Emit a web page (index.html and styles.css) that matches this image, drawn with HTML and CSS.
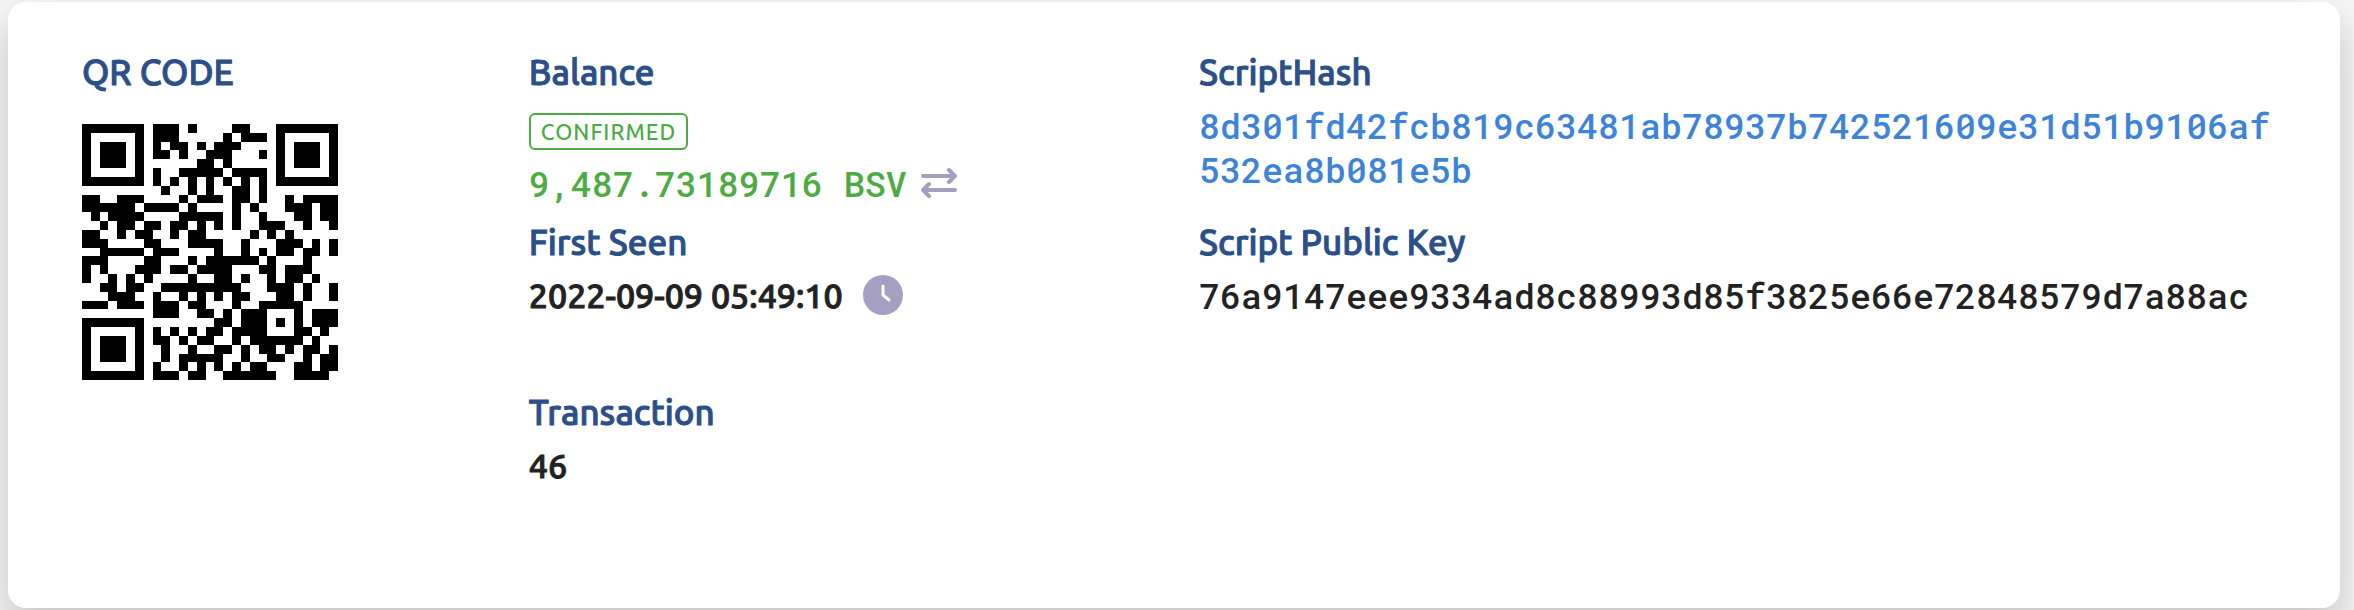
FILE: index.html
```
<!DOCTYPE html>
<html lang="en">
<head>
  <meta charset="UTF-8">
  <title>Address</title>
  <meta name="viewport" content="width=device-width, initial-scale=1.0">
  <link rel="stylesheet" href="styles.css">
</head>
<body>

<div class="card">
  <!-- QR -->
  <div class="col">
    <div class="label">QR CODE</div>
    <svg id="qr" class="qr" viewBox="0 0 29 29" role="img" aria-label="Address QR code"></svg>
  </div>

  <!-- BALANCE / DATES -->
  <div class="col">
    <div class="field">
      <div class="label">Balance</div>
      <span class="badge">CONFIRMED</span>
      <div class="value mono balance">
        9,487.73189716 BSV
        <button class="swap" type="button" aria-label="Switch currency">
          <svg viewBox="0 0 36 30" width="36" height="30">
            <path d="M2 8H34M28 2L34 8L28 14M34 22H2M8 16L2 22L8 28"/>
          </svg>
        </button>
      </div>
    </div>
    <div class="field">
      <div class="label">First Seen</div>
      <div class="value date">
        2022-09-09 05:49:10
        <svg class="clock" viewBox="0 0 40 40" width="40" height="40">
          <circle cx="20" cy="20" r="20"/>
          <path d="M20 11V20L26 25"/>
        </svg>
      </div>
    </div>
    <div class="field">
      <div class="label">Transaction</div>
      <div class="value">46</div>
    </div>
  </div>

  <!-- SCRIPTS -->
  <div class="col">
    <div class="field">
      <div class="label">ScriptHash</div>
      <a class="value mono" href="#">8d301fd42fcb819c63481ab78937b742521609e31d51b9106af532ea8b081e5b</a>
    </div>
    <div class="field">
      <div class="label">Script Public Key</div>
      <div class="value mono">76a9147eee9334ad8c88993d85f3825e66e72848579d7a88ac</div>
    </div>
  </div>
</div>

<script>
  const rows = [
    "#######.###.#....##...#######",
    "#.....#.###.....#.###.#.....#",
    "#.###.#.#.##.#.###....#.###.#",
    "#.###.#.##.#..###...#.#.###.#",
    "#.###.#......##.#.....#.###.#",
    "#.....#.#..#####.####.#.....#",
    "#######.#.#.#.#.#.#.#.#######",
    ".........#..#.#..##.#........",
    "##..###....#.###.##.#..#.####",
    "######.####.#....#.#...###.##",
    ".#.####....#####.#..#...##.##",
    "..#.##.##.##.#.#.#..###..#..#",
    "##..#.##..#.##.....#.#.#.....",
    "###....##...####..#...###.#.#",
    "..#####.###....#..#.#.##.##.#",
    "###....##...#.######.#...#...",
    "#.#...###.##.####...##.###...",
    "#..#.#.#....#..##.#..#.##.#..",
    "..##.##..#########...###.#..#",
    "...###..#..#.#.#.##...##.#..#",
    "###.###.###.##...#..#####....",
    "........###..##.#.###...#.###",
    "#######........##.###.#.#.###",
    "#.....#.#.#.#.##.####...##.#.",
    "#.###.#.##.#.##..#.######.#..",
    "#.###.#..#..#..##.#.##.#.##.#",
    "#.###.#..#.#####..#..##..#.##",
    "#.....#.#..#.#.#.#.##...##.##",
    "#######.###.##..######..####."
  ];

  let d = "";
  rows.forEach((row, y) => {
    for (const run of row.matchAll(/#+/g)) {
      const w = run[0].length;
      d += `M${run.index} ${y}h${w}v1h-${w}z`;
    }
  });
  document.getElementById("qr").innerHTML = `<path d="${d}"/>`;
</script>
</body>
</html>
```
FILE: styles.css
```
body {
  font-family: "Ubuntu", "Noto Sans", sans-serif;
  font-size: 34px;
  font-weight: 500;
  line-height: 44px;
  background: #f5f5f6;
  margin: 0;
  padding: 2px 14px 2px 8px;
  color: #222;
}

.card {
  display: grid;
  grid-template-columns: 2fr 3fr 5fr;
  background: white;
  padding: 48px 48px 48px 50px;
  border-radius: 18px;
  box-shadow: 0 20px 40px rgba(0,0,0,0.2);
}

.col {
  min-width: 0;
  padding: 0 10px 0 24px;
}

.label {
  color: #2b4f89;
  font-size: 35px;
  -webkit-text-stroke: 1px;
  margin-bottom: 9px;
}

.qr {
  display: block;
  width: 256px;
  height: 256px;
  margin-top: 30px;
  shape-rendering: crispEdges;
}

.field {
  min-height: 170px;
}

.value {
  display: block;
  overflow-wrap: anywhere;
  -webkit-text-stroke: 1px;
}

.mono {
  font-family: "Roboto Mono", "DejaVu Sans Mono", monospace;
  font-size: 35px;
  -webkit-text-stroke: 0;
}

a.value {
  color: #3d84d9;
  text-decoration: none;
}

.badge {
  display: block;
  width: fit-content;
  border: 2px solid #4dab43;
  border-radius: 6px;
  color: #4dab43;
  font-size: 22px;
  line-height: 33px;
  letter-spacing: 1px;
  padding: 0 10px;
  margin: 19px 0 11px;
}

.balance, .date {
  display: flex;
  align-items: center;
  white-space: nowrap;
}

.balance {
  color: #4dab43;
  gap: 14px;
}

.date {
  gap: 20px;
}

.swap {
  display: flex;
  background: none;
  border: none;
  padding: 0;
  cursor: pointer;
}

.swap path {
  fill: none;
  stroke: #a59fc1;
  stroke-width: 4;
  stroke-linecap: round;
  stroke-linejoin: round;
}

.clock circle {
  fill: #a59fc1;
}

.clock path {
  fill: none;
  stroke: white;
  stroke-width: 3;
  stroke-linecap: round;
}
```
